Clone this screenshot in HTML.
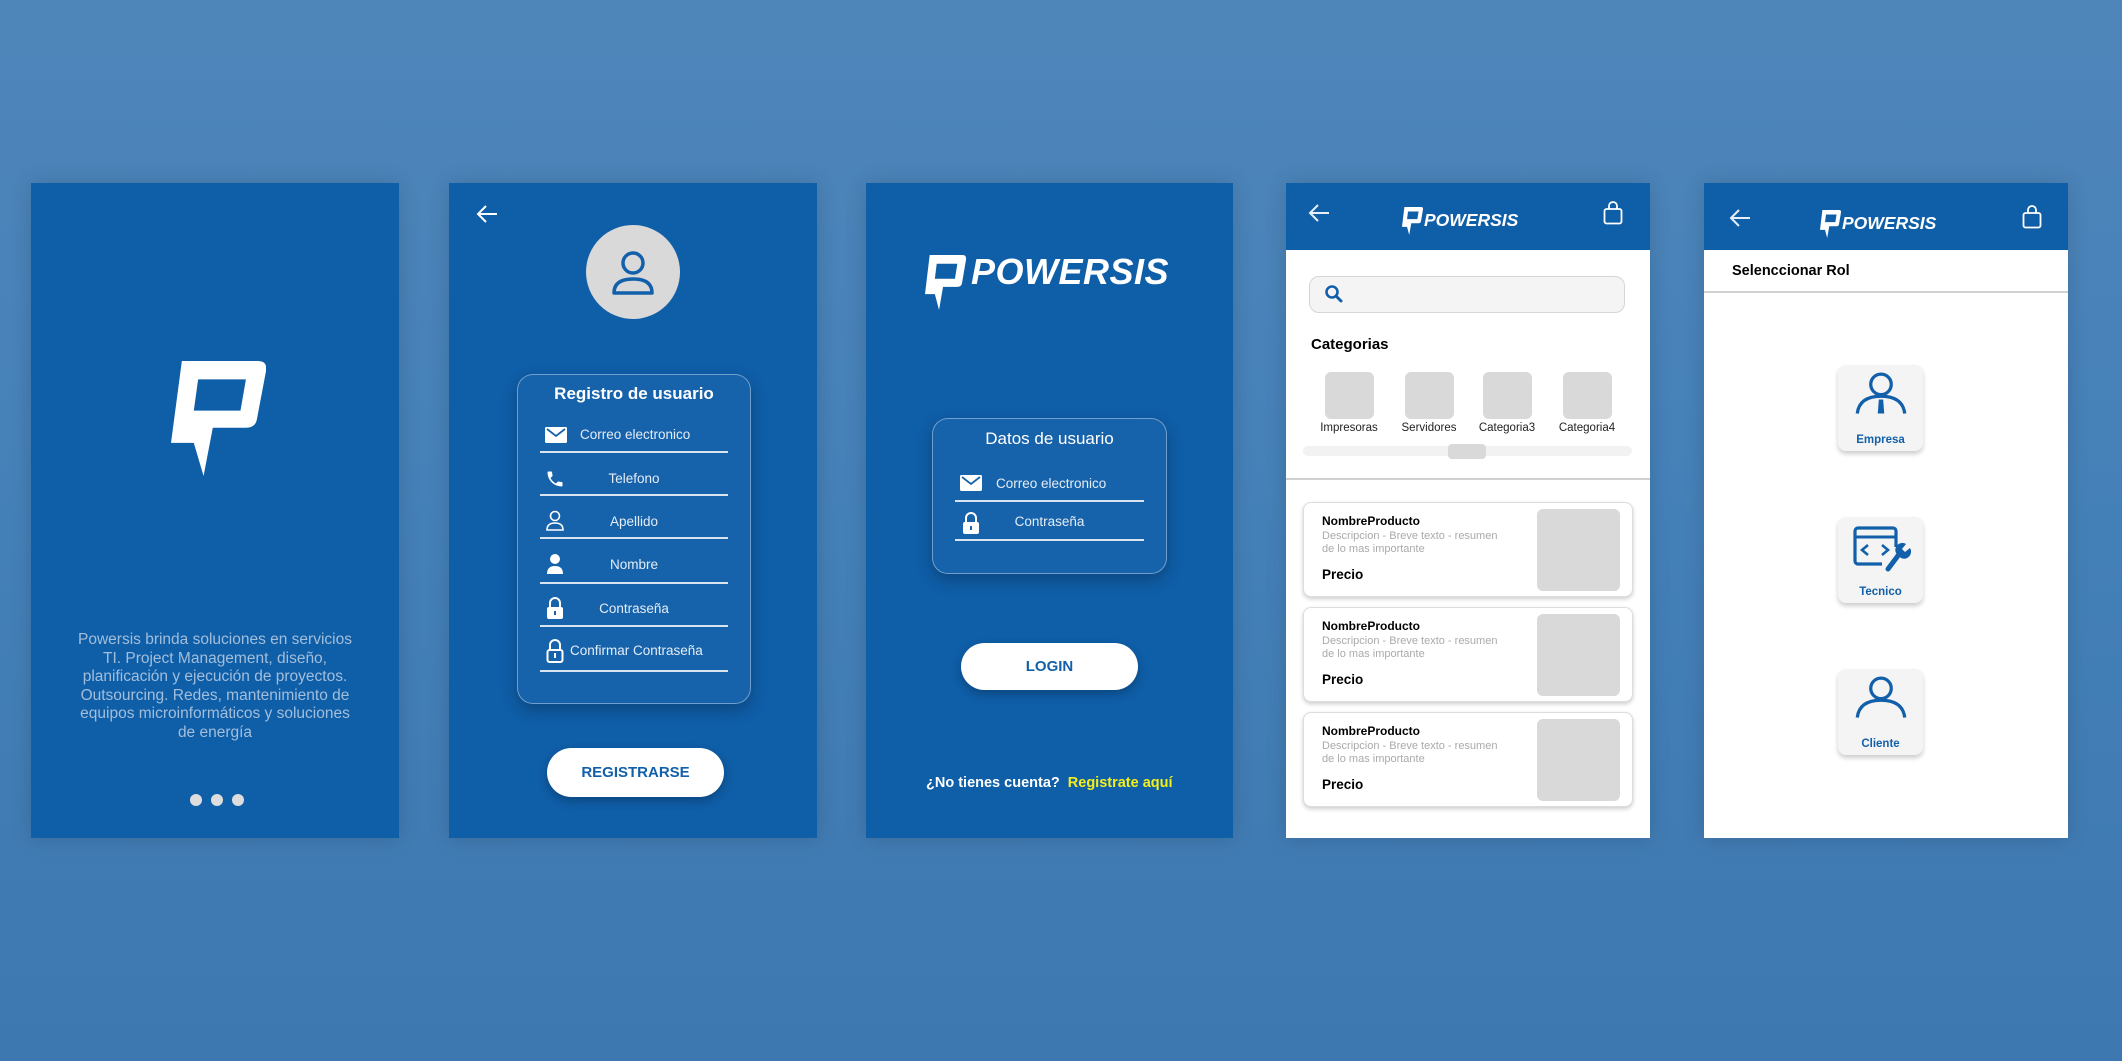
<!DOCTYPE html>
<html><head><meta charset="utf-8">
<style>
*{margin:0;padding:0;box-sizing:border-box}
body{width:2122px;height:1061px;overflow:hidden;background:linear-gradient(180deg,#4f86ba 0%,#4480b8 50%,#3e78b0 100%);font-family:"Liberation Sans",sans-serif;position:relative}
.a{position:absolute}
.scr{position:absolute;top:183px;height:655px;background:#0f5ea8;box-shadow:0 0 20px rgba(0,0,0,.15)}
.w{background:#fff}
.c{text-align:center;white-space:nowrap}
.t{color:#fff}
.line{position:absolute;height:1.5px;background:#d8e4f0}
.btn{position:absolute;background:#fff;border-radius:26px;color:#1360aa;font-weight:bold;font-size:15px;display:flex;align-items:center;justify-content:center;box-shadow:0 4px 10px rgba(0,0,0,.25)}
.cat{position:absolute;width:49px;height:47px;background:#d9d9d9;border-radius:6px}
.catl{position:absolute;font-size:11.5px;color:#222;width:80px;text-align:center}
.card{position:absolute;left:1303px;width:330px;height:95px;background:#fff;border:1px solid #ddd;border-radius:8px;box-shadow:0 2px 4px rgba(0,0,0,.2)}
.card .n{position:absolute;left:18px;top:11px;font-size:12px;font-weight:bold;color:#000}
.card .d{position:absolute;left:18px;top:27px;font-size:11px;color:#aaa;line-height:12.5px}
.card .p{position:absolute;left:18px;top:64px;font-size:13.5px;font-weight:bold;color:#000}
.card .im{position:absolute;right:12px;top:6px;width:83px;height:82px;background:#d9d9d9;border-radius:6px}
.role{position:absolute;left:1838px;width:85px;height:86px;background:#f4f4f4;border-radius:8px;box-shadow:0 3px 5px rgba(0,0,0,.2)}
.role span{position:absolute;left:0;right:0;bottom:5px;text-align:center;color:#1360aa;font-weight:bold;font-size:11.5px}
.ph{font-weight:bold;font-style:italic;color:#fff;white-space:nowrap}
</style></head><body>

<!-- Screen 1 -->
<div class="scr" style="left:31px;width:368px"></div>
<svg class="a" style="left:171px;top:361px" width="95" height="115" viewBox="0 0 175 250" preserveAspectRatio="none"><path fill="#fff" fill-rule="evenodd" d="M20 0 L160 0 Q178 0 175 22 L158 128 Q155 145 138 145 L77 145 L60 250 L42 178 L0 178 Z M50 40 L138 40 L128 108 L42 108 Z"/></svg>
<div class="a c" style="left:31px;width:368px;top:631px;font-size:15.5px;line-height:18.5px;color:#a2bedb">Powersis brinda soluciones en servicios<br>TI. Project Management, diseño,<br>planificación y ejecución de proyectos.<br>Outsourcing. Redes, mantenimiento de<br>equipos microinformáticos y soluciones<br>de energía</div>
<div class="a" style="left:190px;top:794px;width:12px;height:12px;border-radius:50%;background:#ddd"></div>
<div class="a" style="left:211px;top:794px;width:12px;height:12px;border-radius:50%;background:#ddd"></div>
<div class="a" style="left:232px;top:794px;width:12px;height:12px;border-radius:50%;background:#ddd"></div>

<!-- Screen 2 -->
<div class="scr" style="left:449px;width:368px"></div>
<svg class="a" style="left:476px;top:204px" width="22" height="20" viewBox="0 0 22 20"><path d="M21 10H2M10 2L2 10L10 18" stroke="#fff" stroke-width="2" fill="none"/></svg>
<div class="a" style="left:586px;top:225px;width:94px;height:94px;border-radius:50%;background:#d9d9d9"></div>
<svg class="a" style="left:606px;top:245px" width="54" height="54" viewBox="0 0 54 54"><circle cx="27" cy="18" r="10" stroke="#1360aa" stroke-width="3.5" fill="none"/><path d="M8 48 Q8 34 27 34 Q46 34 46 48 Z" stroke="#1360aa" stroke-width="3.5" fill="none" stroke-linejoin="round"/></svg>
<div class="a" style="left:517px;top:374px;width:234px;height:330px;border-radius:16px;border:1px solid rgba(200,220,240,.5);background:#1763ab;box-shadow:0 6px 16px rgba(0,0,0,.25)"></div>
<div class="a c t" style="left:517px;width:234px;top:384px;font-size:17px;font-weight:bold">Registro de usuario</div>
<div class="line" style="left:540px;width:188px;top:451px"></div>
<div class="line" style="left:540px;width:188px;top:494px"></div>
<div class="line" style="left:540px;width:188px;top:537px"></div>
<div class="line" style="left:540px;width:188px;top:582px"></div>
<div class="line" style="left:540px;width:188px;top:625px"></div>
<div class="line" style="left:540px;width:188px;top:670px"></div>
<div class="a t" style="left:580px;top:427px;font-size:13.5px;color:#e4ecf5">Correo electronico</div>
<div class="a c t" style="left:540px;width:188px;top:471px;font-size:13.5px;color:#e4ecf5">Telefono</div>
<div class="a c t" style="left:540px;width:188px;top:514px;font-size:13.5px;color:#e4ecf5">Apellido</div>
<div class="a c t" style="left:540px;width:188px;top:557px;font-size:13.5px;color:#e4ecf5">Nombre</div>
<div class="a c t" style="left:540px;width:188px;top:601px;font-size:13.5px;color:#e4ecf5">Contraseña</div>
<div class="a t" style="left:570px;top:643px;font-size:13.5px;color:#e4ecf5">Confirmar Contraseña</div>
<svg class="a" style="left:545px;top:427px" width="22" height="16" viewBox="0 0 22 16"><rect width="22" height="16" rx="1.5" fill="#fff"/><path d="M2 2L11 9L20 2" stroke="#1763ab" stroke-width="1.8" fill="none"/></svg>
<svg class="a" style="left:545px;top:469px" width="20" height="20" viewBox="0 0 24 24"><path fill="#fff" d="M6.6 10.8a15 15 0 0 0 6.6 6.6l2.2-2.2a1 1 0 0 1 1-.25 11.4 11.4 0 0 0 3.6.6 1 1 0 0 1 1 1V20a1 1 0 0 1-1 1A17 17 0 0 1 3 4a1 1 0 0 1 1-1h3.5a1 1 0 0 1 1 1c0 1.250.2 2.45.6 3.6a1 1 0 0 1-.25 1z"/></svg>
<svg class="a" style="left:545px;top:510px" width="20" height="22" viewBox="0 0 20 22"><circle cx="10" cy="6" r="4.5" stroke="#fff" stroke-width="1.6" fill="none"/><path d="M2 20 Q2 13 10 13 Q18 13 18 20 Z" stroke="#fff" stroke-width="1.6" fill="none"/></svg>
<svg class="a" style="left:545px;top:553px" width="20" height="22" viewBox="0 0 20 22"><circle cx="10" cy="6" r="5" fill="#fff"/><path d="M2 21 Q2 13 10 13 Q18 13 18 21 Z" fill="#fff"/></svg>
<svg class="a" style="left:546px;top:597px" width="18" height="22" viewBox="0 0 18 22"><path d="M4 10V6a5 5 0 0 1 10 0v4" stroke="#fff" stroke-width="2" fill="none"/><rect x="1" y="10" width="16" height="12" rx="2" fill="#fff"/><rect x="8" y="14" width="2" height="4" fill="#1763ab"/></svg>
<svg class="a" style="left:546px;top:639px" width="18" height="24" viewBox="0 0 18 24"><path d="M4 11V6a5 5 0 0 1 10 0v5" stroke="#fff" stroke-width="2" fill="none"/><rect x="1.5" y="11" width="15" height="12" rx="2" stroke="#fff" stroke-width="2" fill="none"/><rect x="8" y="14" width="2" height="5" fill="#fff"/></svg>
<div class="btn" style="left:547px;top:748px;width:177px;height:49px">REGISTRARSE</div>

<!-- Screen 3 -->
<div class="scr" style="left:866px;width:367px"></div>
<svg class="a" style="left:925px;top:255px" width="41" height="55" viewBox="0 0 175 250" preserveAspectRatio="none"><path fill="#fff" fill-rule="evenodd" d="M20 0 L160 0 Q178 0 175 22 L158 128 Q155 145 138 145 L77 145 L60 250 L42 178 L0 178 Z M50 40 L138 40 L128 108 L42 108 Z"/></svg>
<div class="a ph" style="left:971px;top:251px;font-size:36px;letter-spacing:0.5px">POWERSIS</div>
<div class="a" style="left:932px;top:418px;width:235px;height:156px;border-radius:16px;border:1px solid rgba(200,220,240,.5);background:#1763ab;box-shadow:0 6px 16px rgba(0,0,0,.25)"></div>
<div class="a c t" style="left:932px;width:235px;top:429px;font-size:17px">Datos de usuario</div>
<svg class="a" style="left:960px;top:475px" width="22" height="16" viewBox="0 0 22 16"><rect width="22" height="16" rx="1.5" fill="#fff"/><path d="M2 2L11 9L20 2" stroke="#1763ab" stroke-width="1.8" fill="none"/></svg>
<div class="a" style="left:996px;top:476px;font-size:13.5px;color:#e4ecf5">Correo electronico</div>
<div class="line" style="left:955px;width:189px;top:500px"></div>
<svg class="a" style="left:962px;top:512px" width="18" height="22" viewBox="0 0 18 22"><path d="M4 10V6a5 5 0 0 1 10 0v4" stroke="#fff" stroke-width="2" fill="none"/><rect x="1" y="10" width="16" height="12" rx="2" fill="#fff"/><rect x="8" y="14" width="2" height="4" fill="#1763ab"/></svg>
<div class="a c" style="left:955px;width:189px;top:514px;font-size:13.5px;color:#e4ecf5">Contraseña</div>
<div class="line" style="left:955px;width:189px;top:539px"></div>
<div class="btn" style="left:961px;top:643px;width:177px;height:47px">LOGIN</div>
<div class="a t" style="left:926px;top:775px;font-size:14.5px;font-weight:bold;white-space:nowrap">¿No tienes cuenta? <span style="color:#f4ee1a;margin-left:4px">Registrate aquí</span></div>

<!-- Screen 4 -->
<div class="scr w" style="left:1286px;width:364px"></div>
<div class="a" style="left:1286px;top:183px;width:364px;height:67px;background:#0f5ea8"></div>
<svg class="a" style="left:1308px;top:203px" width="22" height="20" viewBox="0 0 22 20"><path d="M21 10H2M10 2L2 10L10 18" stroke="#e8eef5" stroke-width="2" fill="none"/></svg>
<svg class="a" style="left:1402px;top:207px" width="21" height="28" viewBox="0 0 175 250" preserveAspectRatio="none"><path fill="#fff" fill-rule="evenodd" d="M20 0 L160 0 Q178 0 175 22 L158 128 Q155 145 138 145 L77 145 L60 250 L42 178 L0 178 Z M50 40 L138 40 L128 108 L42 108 Z"/></svg>
<div class="a ph" style="left:1424px;top:210px;font-size:17.5px">POWERSIS</div>
<svg class="a" style="left:1603px;top:201px" width="20" height="24" viewBox="0 0 20 24"><path d="M6 8V5a4 4 0 0 1 8 0v3" stroke="#fff" stroke-width="1.8" fill="none"/><rect x="1.5" y="8" width="17" height="14.5" rx="2" stroke="#fff" stroke-width="1.8" fill="none"/></svg>
<div class="a" style="left:1309px;top:276px;width:316px;height:37px;background:#f4f4f4;border:1px solid #d6d6d6;border-radius:10px"></div>
<svg class="a" style="left:1324px;top:284px" width="20" height="20" viewBox="0 0 20 20"><circle cx="8" cy="8" r="5.5" stroke="#1360aa" stroke-width="2.6" fill="none"/><path d="M12 12L17 17" stroke="#1360aa" stroke-width="3" stroke-linecap="round"/></svg>
<div class="a" style="left:1311px;top:336px;font-size:15px;font-weight:bold;color:#000">Categorias</div>
<div class="cat" style="left:1325px;top:372px"></div>
<div class="cat" style="left:1405px;top:372px"></div>
<div class="cat" style="left:1483px;top:372px"></div>
<div class="cat" style="left:1563px;top:372px"></div>
<div class="catl" style="left:1309px;top:422px">Impresoras</div>
<div class="catl" style="left:1389px;top:422px">Servidores</div>
<div class="catl" style="left:1467px;top:422px">Categoria3</div>
<div class="catl" style="left:1547px;top:422px">Categoria4</div>
<div class="a" style="left:1303px;top:446px;width:329px;height:10px;background:#f2f2f2;border-radius:5px"></div>
<div class="a" style="left:1448px;top:444px;width:38px;height:15px;background:#d9d9d9;border-radius:4px"></div>
<div class="a" style="left:1286px;top:478px;width:364px;height:2px;background:#d0d0d0"></div>
<div class="card" style="top:502px"><div class="n">NombreProducto</div><div class="d">Descripcion - Breve texto - resumen<br>de lo mas importante</div><div class="p">Precio</div><div class="im"></div></div>
<div class="card" style="top:607px"><div class="n">NombreProducto</div><div class="d">Descripcion - Breve texto - resumen<br>de lo mas importante</div><div class="p">Precio</div><div class="im"></div></div>
<div class="card" style="top:712px"><div class="n">NombreProducto</div><div class="d">Descripcion - Breve texto - resumen<br>de lo mas importante</div><div class="p">Precio</div><div class="im"></div></div>

<!-- Screen 5 -->
<div class="scr w" style="left:1704px;width:364px"></div>
<div class="a" style="left:1704px;top:183px;width:364px;height:67px;background:#0f5ea8"></div>
<svg class="a" style="left:1729px;top:208px" width="22" height="20" viewBox="0 0 22 20"><path d="M21 10H2M10 2L2 10L10 18" stroke="#e8eef5" stroke-width="2" fill="none"/></svg>
<svg class="a" style="left:1820px;top:210px" width="21" height="28" viewBox="0 0 175 250" preserveAspectRatio="none"><path fill="#fff" fill-rule="evenodd" d="M20 0 L160 0 Q178 0 175 22 L158 128 Q155 145 138 145 L77 145 L60 250 L42 178 L0 178 Z M50 40 L138 40 L128 108 L42 108 Z"/></svg>
<div class="a ph" style="left:1842px;top:213px;font-size:17.5px">POWERSIS</div>
<svg class="a" style="left:2022px;top:205px" width="20" height="24" viewBox="0 0 20 24"><path d="M6 8V5a4 4 0 0 1 8 0v3" stroke="#fff" stroke-width="1.8" fill="none"/><rect x="1.5" y="8" width="17" height="14.5" rx="2" stroke="#fff" stroke-width="1.8" fill="none"/></svg>
<div class="a" style="left:1732px;top:263px;font-size:14.5px;font-weight:bold;color:#000">Selenccionar Rol</div>
<div class="a" style="left:1704px;top:291px;width:364px;height:2px;background:#d0d0d0"></div>
<div class="role" style="top:365px"><svg class="a" style="left:16px;top:6px" width="54" height="44" viewBox="0 0 50 40"><circle cx="25" cy="12" r="9.5" stroke="#1360aa" stroke-width="3" fill="none"/><path d="M3 39 Q5 23 25 23 Q45 23 47 39" stroke="#1360aa" stroke-width="3" fill="none"/><path d="M23 26H27L28 39H22Z" fill="#1360aa"/></svg><span>Empresa</span></div>
<div class="role" style="top:517px"><svg class="a" style="left:14px;top:8px" width="62" height="48" viewBox="0 0 62 48"><path d="M44 22V6a3 3 0 0 0-3-3H6a3 3 0 0 0-3 3v30a3 3 0 0 0 3 3h24" stroke="#1360aa" stroke-width="3.2" fill="none"/><path d="M3 12H44" stroke="#1360aa" stroke-width="3"/><path d="M16 20L10 25L16 30M30 20L36 25L30 30" stroke="#1360aa" stroke-width="2.6" fill="none"/><path d="M36 44L48 28" stroke="#1360aa" stroke-width="5" stroke-linecap="round"/><path d="M44 28a7 7 0 0 1 10-9l-4 5 3 3 5-4a7 7 0 0 1-9 10z" fill="#1360aa"/></svg><span>Tecnico</span></div>
<div class="role" style="top:669px"><svg class="a" style="left:16px;top:6px" width="54" height="44" viewBox="0 0 50 40"><circle cx="25" cy="12" r="9.5" stroke="#1360aa" stroke-width="3" fill="none"/><path d="M3 39 Q5 23 25 23 Q45 23 47 39" stroke="#1360aa" stroke-width="3" fill="none"/></svg><span>Cliente</span></div>

</body></html>
